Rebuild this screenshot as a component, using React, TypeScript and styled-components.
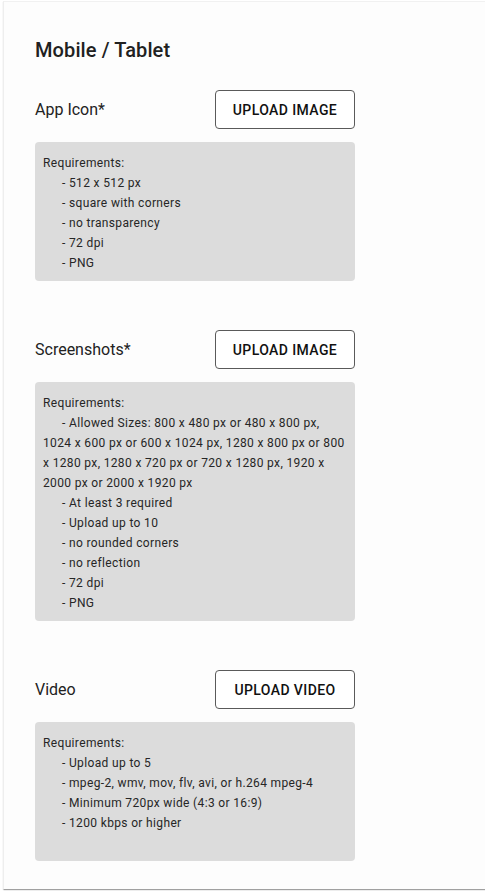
import React from 'react';
import styled, { createGlobalStyle } from 'styled-components';

const GlobalStyle = createGlobalStyle`
  html, body {
    margin: 0;
    padding: 0;
    background: #ffffff;
    overflow: hidden;
  }
  body {
    font-family: Roboto, "Liberation Sans", Arial, sans-serif;
    color: #212121;
  }
`

const Page = styled.div`
  padding: 1px 0 0 3px;
  width: 485px;
  height: 894px;
  box-sizing: border-box;
  overflow: hidden;
`

const Card = styled.div`
  width: 500px;
  background: #fdfdfd;
  border-top: 1px solid #f1f1f1;
  border-left: 1px solid #eeeeee;
  box-shadow: 0 2px 1px -1px rgba(0, 0, 0, 0.25), 0 1px 1px 0 rgba(0, 0, 0, 0.16);
  padding: 30px 0 28px 31px;
  box-sizing: border-box;
`

const Heading = styled.h2`
  margin: 0 0 22px;
  font-size: 20px;
  font-weight: 500;
  line-height: 36px;
  color: #212121;
  letter-spacing: 0.1px;
`

const Section = styled.section<{ $last?: boolean }>`
  width: 320px;
  margin-bottom: ${(p) => (p.$last ? '0' : '49px')};
`

const Row = styled.div`
  display: grid;
  grid-template-columns: 180px 140px;
  align-items: center;
  margin-bottom: 13px;
`

const Label = styled.div`
  font-size: 16px;
  line-height: 24px;
  color: #222222;
`

const UploadButton = styled.button`
  height: 39px;
  box-sizing: border-box;
  border: 1px solid #5a5a5a;
  border-radius: 4px;
  background: #ffffff;
  font-family: Roboto, "Liberation Sans", Arial, sans-serif;
  font-size: 14px;
  font-weight: 500;
  letter-spacing: 0.4px;
  text-transform: uppercase;
  color: #111111;
  padding: 0;
  cursor: pointer;
`

const Requirements = styled.div<{ $trailing?: boolean }>`
  background: #dcdcdc;
  border-radius: 4px;
  padding: 12px 8px ${(p) => (p.$trailing ? '27px' : '8px')} 8px;
  font-size: 12px;
  line-height: 19.9px;
  letter-spacing: 0.35px;
  color: #262626;
`

const Item = styled.div`
  text-indent: 19px;
`

type Block = {
  label: string;
  button: string;
  items: string[];
  trailing?: boolean;
};

const blocks: Block[] = [
  {
    label: 'App Icon*',
    button: 'Upload Image',
    items: ['- 512 x 512 px', '- square with corners', '- no transparency', '- 72 dpi', '- PNG'],
  },
  {
    label: 'Screenshots*',
    button: 'Upload Image',
    items: [
      '- Allowed Sizes: 800 x 480 px or 480 x 800 px, 1024 x 600 px or 600 x 1024 px, 1280 x 800 px or 800 x 1280 px, 1280 x 720 px or 720 x 1280 px, 1920 x 2000 px or 2000 x 1920 px',
      '- At least 3 required',
      '- Upload up to 10',
      '- no rounded corners',
      '- no reflection',
      '- 72 dpi',
      '- PNG',
    ],
  },
  {
    label: 'Video',
    button: 'Upload Video',
    items: [
      '- Upload up to 5',
      '- mpeg-2, wmv, mov, flv, avi, or h.264 mpeg-4',
      '- Minimum 720px wide (4:3 or 16:9)',
      '- 1200 kbps or higher',
    ],
    trailing: true,
  },
];

const App: React.FC = () => {
  return (
    <>
      <GlobalStyle />
      <Page>
        <Card>
          <Heading>Mobile / Tablet</Heading>
          {blocks.map((block, i) => (
            <Section key={block.label} $last={i === blocks.length - 1}>
              <Row>
                <Label>{block.label}</Label>
                <UploadButton>{block.button}</UploadButton>
              </Row>
              <Requirements $trailing={block.trailing}>
                <div>Requirements:</div>
                {block.items.map((item) => (
                  <Item key={item}>{item}</Item>
                ))}
              </Requirements>
            </Section>
          ))}
        </Card>
      </Page>
    </>
  );
};

export default App;
